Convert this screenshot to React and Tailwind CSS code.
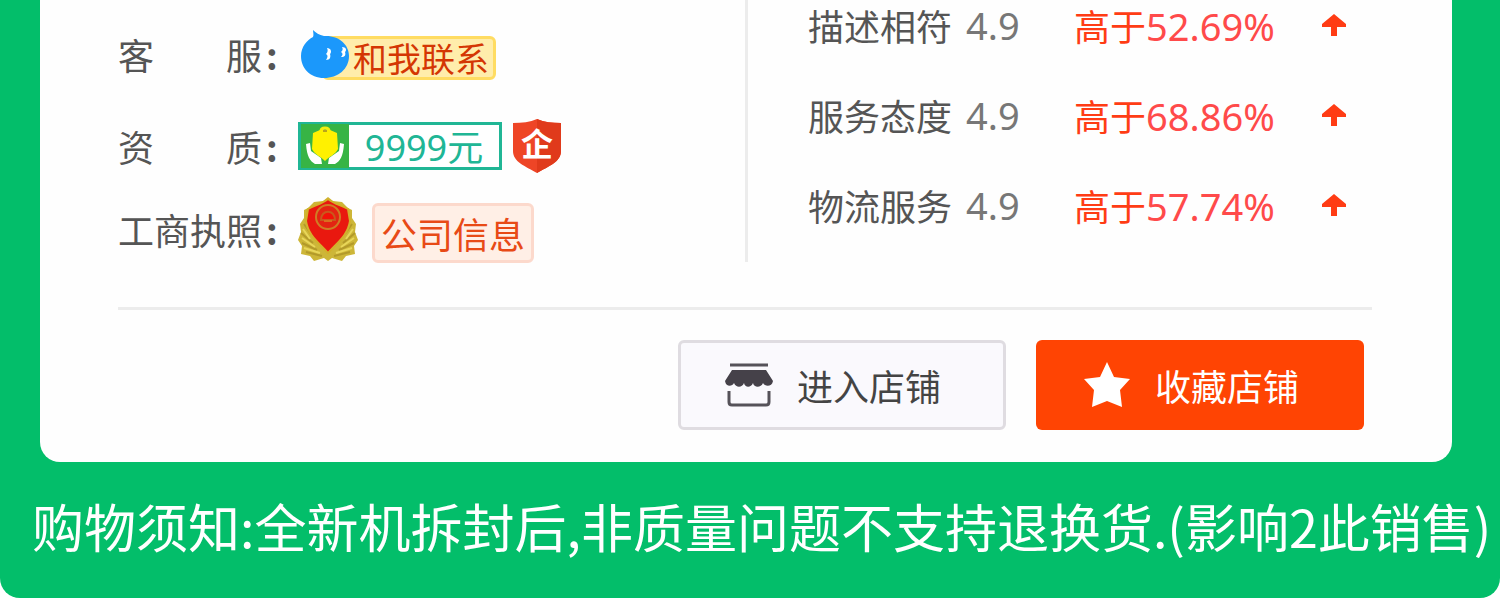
import React from 'react';

const services = [
  { name: '描述相符', score: '4.9', percent: '52.69%' },
  { name: '服务态度', score: '4.9', percent: '68.86%' },
  { name: '物流服务', score: '4.9', percent: '57.74%' },
];

const WangwangIcon = () => (
  <svg viewBox="0 0 50 50" className="relative z-10 w-[50px] h-[50px]" aria-hidden="true">
    <path
      d="M13 1 C16 4 19 6 24 7 C38 6 49 15 49 27 C49 40 38 49 24 49 C10 49 1 39 1 27 C1 18 7 11 13 8 C14 6 13 3 13 1 Z"
      fill="#1b98fb"
    />
    <path d="M27 19 C31 19 32 23 30 25 C31 28 30 31 26 31 C28 28 28 26 26 25 C28 23 28 21 27 19 Z" fill="#fff" />
    <path d="M42 18 C46 18 47 21 45 23 C46 26 45 28 41 28 C43 26 43 24 41 23 C43 21 43 20 42 18 Z" fill="#fff" />
  </svg>
);

const DepositIcon = () => (
  <svg viewBox="0 0 48 44" className="w-12 h-11" aria-hidden="true">
    <rect width="48" height="44" fill="#37b445" />
    <path d="M20 7 C20 3 28 3 28 7" fill="none" stroke="#f5ee10" strokeWidth="3" />
    <path d="M12 9 L19 6 L29 6 L36 9 L37 25 C34 31 29 32 24 37 C19 32 14 31 11 25 Z" fill="#fff100" />
    <path d="M22 7 H26" stroke="#b9a51c" strokeWidth="2" />
    <path d="M5 20 L9 19 L10 27 L20 34 L21 40 L14 40 C9 37 6 33 5 20 Z" fill="#fff" />
    <path d="M43 20 L39 19 L38 27 L28 34 L27 40 L34 40 C39 37 42 33 43 20 Z" fill="#fff" />
  </svg>
);

const EnterpriseIcon = () => (
  <svg viewBox="0 0 50 56" className="w-[50px] h-14" role="img" aria-label="企业">
    <path d="M1 5 C10 5 18 4 25 1 C32 4 40 5 49 5 L49 33 C49 44 37 48 25 55 C13 48 1 44 1 33 Z" fill="#ee4526" />
    <path d="M25 1 C32 4 40 5 49 5 L49 33 C49 44 37 48 25 55 Z" fill="#e03a1b" />
    <text x="25" y="38" textAnchor="middle" fontSize="32" fontWeight="700" fill="#fff">企</text>
  </svg>
);

const LicenseIcon = () => (
  <svg viewBox="0 0 60 66" className="w-[60px] h-[66px]" aria-hidden="true">
    <path
      d="M30 1 L35 5 L44 6 L50 12 L54 14 L54 22 L58 28 L57 36 L60 44 L56 50 L57 58 L48 60 L44 65 L34 62 L30 65 L26 62 L16 65 L12 60 L3 58 L4 50 L0 44 L3 36 L2 28 L6 22 L6 14 L10 12 L16 6 L25 5 Z"
      fill="#cdb638"
    />
    <path
      d="M6 28 L13 38 M3 37 L15 47 M4 47 L19 54 M8 56 L24 60 M54 28 L47 38 M57 37 L45 47 M56 47 L41 54 M52 56 L36 60"
      stroke="#b39a2a"
      strokeWidth="2"
    />
    <path
      d="M5 33 L12 43 M4 42 L17 51 M6 52 L22 57 M55 33 L48 43 M56 42 L43 51 M54 52 L38 57"
      stroke="#e8d65a"
      strokeWidth="2"
    />
    <path d="M30 3 C36 8 43 9 50 13 L52 25 C50 39 40 46 30 57 C20 46 10 39 8 25 L10 13 C17 9 24 8 30 3 Z" fill="#e9180f" stroke="#d3b02b" strokeWidth="2" />
    <circle cx="30" cy="21" r="12" fill="#e32412" stroke="#cf7d24" strokeWidth="2" />
    <path d="M23 24 C23 13 37 13 37 24 Z" fill="#f21208" stroke="#c9581c" strokeWidth="2" />
    <path d="M26 25 L34 25" stroke="#d8701f" strokeWidth="2" />
  </svg>
);

const ArrowUp = () => (
  <svg viewBox="0 0 24 22" className="w-6 h-[22px]" role="img" aria-label="上升">
    <path d="M12 0 L24 10 L24 13 L15 13 L15 22 L9 22 L9 13 L0 13 L0 10 Z" fill="#ff3c14" />
  </svg>
);

const ShopIcon = () => (
  <svg viewBox="0 0 48 44" className="w-12 h-11" aria-hidden="true">
    <path d="M5 2 H43" stroke="#555259" strokeWidth="3" />
    <path
      d="M7 7 H41 L48 18 C47 24 40 24 38 20 C36 25 29 25 28 20 C26 25 20 25 19 20 C17 25 11 25 9 20 C7 24 1 24 0 18 Z"
      fill="#454149"
    />
    <path d="M4 28 V39 Q4 42 7 42 H41 Q44 42 44 39 V28" fill="none" stroke="#555259" strokeWidth="3" />
  </svg>
);

const StarIcon = () => (
  <svg viewBox="0 0 48 48" className="w-12 h-12" aria-hidden="true">
    <path
      d="M24 1 L31 16 L47 18 L37 29 L39 46 L24 40 L9 46 L11 29 L1 18 L17 16 Z"
      fill="#fff"
    />
  </svg>
);

const InfoRow = ({ label, className, children }) => (
  <div className={`flex items-center ${className}`}>
    <dt className="flex w-40 shrink-0 text-[#555]">
      <span className="flex w-36 justify-between">
        {label.map((part) => (
          <span key={part}>{part}</span>
        ))}
      </span>
      <span className="pl-1 font-bold">:</span>
    </dt>
    <dd className="flex items-center pl-5">{children}</dd>
  </div>
);

const App = () => {
  return (
    <div className="overflow-hidden bg-white font-['Noto_Sans_CJK_SC',sans-serif] text-4xl leading-[54px] whitespace-nowrap">
      <main className="rounded-b-[20px] bg-[#03be6a] pr-12 pl-10">
        <section className="rounded-b-[20px] bg-[#fefefe] pr-20 pb-8 pl-[78px]">
          <div className="flex">
            <dl className="flex h-[262px] w-[630px] shrink-0 flex-col border-r-3 border-[#ececec] pt-6">
              <InfoRow label={['客', '服']} className="h-15">
                <a href="#contact" className="flex items-center pl-0.5">
                  <WangwangIcon />
                  <span className="mt-2 -ml-7 flex h-11 items-center rounded-md border-3 border-[#ffdc62] bg-[#ffedab] pr-1 pl-7 text-[34px] text-[#d43603]">
                    和我联系
                  </span>
                </a>
              </InfoRow>
              <InfoRow label={['资', '质']} className="mt-8 h-15">
                <div className="flex h-12 w-[204px] items-center border-3 border-[#20b695] bg-white text-[#20b695]">
                  <DepositIcon />
                  <span className="flex-1 text-center">
                    <span className="font-['Noto_Sans']">9999</span>元
                  </span>
                </div>
                <span className="ml-2.5">
                  <EnterpriseIcon />
                </span>
              </InfoRow>
              <InfoRow label={['工', '商', '执', '照']} className="mt-5 h-[66px]">
                <LicenseIcon />
                <a
                  href="#company"
                  className="mt-2 ml-3.5 flex h-[60px] items-center rounded-md border-3 border-[#fcd9cc] bg-[#ffefe6] px-1.5 text-[#e84a16]"
                >
                  公司信息
                </a>
              </InfoRow>
            </dl>

            {/* Shop ratings compared with the industry */}
            <table className="-mt-5 ml-15 h-[270px]">
              <tbody>
                {services.map((item) => (
                  <tr key={item.name} className="h-[90px]">
                    <th scope="row" className="w-[158px] p-0 text-left font-normal text-[#555]">{item.name}</th>
                    <td className="w-[108px] p-0 font-['Noto_Sans'] text-[38px] text-[#777]">{item.score}</td>
                    <td className="w-[248px] p-0 text-[#ff3c14]">
                      高于<span className="font-['Noto_Sans'] text-[38px] text-[#ff4a4a]">{item.percent}</span>
                    </td>
                    <td className="p-0">
                      <ArrowUp />
                    </td>
                  </tr>
                ))}
              </tbody>
            </table>
          </div>

          <hr className="mt-[45px] border-t-3 border-[#ececec]" />

          <div className="mt-[30px] flex justify-end gap-[30px] pr-2">
            <button
              type="button"
              className="flex h-[90px] w-[328px] items-center gap-6 rounded-md border-3 border-[#dfdce1] bg-[#faf9fd] pl-11 text-[#444]"
            >
              <ShopIcon />
              进入店铺
            </button>
            <button
              type="button"
              className="flex h-[90px] w-[328px] items-center gap-6 rounded-md bg-[#ff4403] pl-[47px] text-white"
            >
              <StarIcon />
              收藏店铺
            </button>
          </div>
        </section>

        <p className="-mr-12 -ml-2 pt-6 pb-8 text-[52px] leading-20 text-white">
          购物须知:全新机拆封后,非质量问题不支持退换货.(影响2此销售)
        </p>
      </main>
    </div>
  );
};

export default App;
